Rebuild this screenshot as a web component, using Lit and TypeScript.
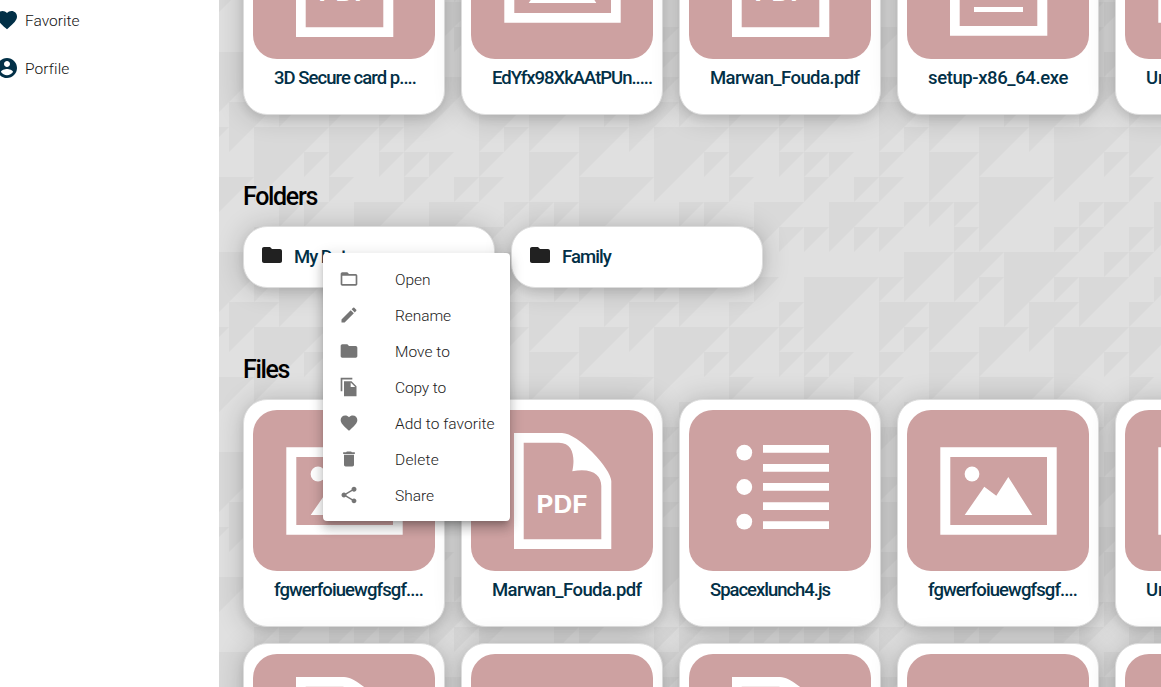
import { LitElement, html, css, svg, unsafeCSS } from "lit";
import { customElement, property } from "lit/decorators.js";

// Triangle mosaic: L = light cell, D = dark cell, T = dark upper-left half.
const MOSAIC = [
  "TTTLLTTTLDTTDDTD",
  "LTTTLTLDTTLLDTTT",
  "LLTLTTLTLDDTTLLT",
  "DTLDTLTTTDTLLTTL",
  "TTTTTTLLTTLLTTLT",
  "LLLLLLDTDTDDTLTT",
  "TLDDTTTLTTDTTDTL",
  "LTDTLDTDTLTDTTLT",
];
const CELL = 25;
const mosaicPath = MOSAIC.map((row, r) =>
  [...row]
    .map((c, i) => {
      const start = `M${i * CELL} ${r * CELL}h${CELL}`;
      if (c === "D") return `${start}v${CELL}h-${CELL}z`;
      if (c === "T") return `${start}l-${CELL} ${CELL}z`;
      return "";
    })
    .join("")
).join("");
const mosaic = encodeURIComponent(
  `<svg xmlns="http://www.w3.org/2000/svg" width="400" height="200"><path fill="#e0e0e0" d="M0 0h400v200H0z"/><path fill="#d9d9d9" d="${mosaicPath}"/></svg>`
);

const ICONS: Record<string, string> = {
  heart:
    "M12 21.35l-1.45-1.32C5.4 15.36 2 12.28 2 8.5 2 5.42 4.42 3 7.5 3c1.74 0 3.41.81 4.5 2.09C13.09 3.81 14.76 3 16.5 3 19.58 3 22 5.42 22 8.5c0 3.78-3.4 6.86-8.55 11.54L12 21.35z",
  account:
    "M12 2C6.48 2 2 6.48 2 12s4.48 10 10 10 10-4.48 10-10S17.52 2 12 2zm0 3c1.66 0 3 1.34 3 3s-1.34 3-3 3-3-1.34-3-3 1.34-3 3-3zm0 14.2c-2.5 0-4.71-1.28-6-3.22.03-1.99 4-3.08 6-3.08 1.99 0 5.97 1.09 6 3.08-1.29 1.94-3.5 3.22-6 3.22z",
  folder:
    "M10 4H4c-1.1 0-1.99.9-1.99 2L2 18c0 1.1.9 2 2 2h16c1.1 0 2-.9 2-2V8c0-1.1-.9-2-2-2h-8l-2-2z",
  folderOpen:
    "M20 6h-8l-2-2H4c-1.1 0-1.99.9-1.99 2L2 18c0 1.1.9 2 2 2h16c1.1 0 2-.9 2-2V8c0-1.1-.9-2-2-2zm0 12H4V8h16v10z",
  edit: "M3 17.25V21h3.75L17.81 9.94l-3.75-3.75L3 17.25zM20.71 7.04c.39-.39.39-1.02 0-1.41l-2.34-2.34a.9959.9959 0 0 0-1.41 0l-1.83 1.83 3.75 3.75 1.83-1.83z",
  copy: "M16 1H2v16h2V3h12V1zm-1 4l6 6v12H6V5h9zm-1 7h5.5L14 6.5V12z",
  trash: "M6 19c0 1.1.9 2 2 2h8c1.1 0 2-.9 2-2V7H6v12zM19 4h-3.5l-1-1h-5l-1 1H5v2h14V4z",
  share:
    "M18 16.08c-.76 0-1.44.3-1.96.77L8.91 12.7c.05-.23.09-.46.09-.7s-.04-.47-.09-.7l7.05-4.11c.54.5 1.25.81 2.04.81 1.66 0 3-1.34 3-3s-1.34-3-3-3-3 1.34-3 3c0 .24.04.47.09.7L8.04 9.81C7.5 9.31 6.79 9 6 9c-1.66 0-3 1.34-3 3s1.34 3 3 3c.79 0 1.5-.31 2.04-.81l7.12 4.16c-.05.21-.08.43-.08.65 0 1.61 1.31 2.92 2.92 2.92 1.61 0 2.92-1.31 2.92-2.92s-1.31-2.92-2.92-2.92z",
};
const icon = (name: string, size = 24) =>
  html`<svg width=${size} height=${size} viewBox="0 0 24 24"><path fill="currentColor" d=${ICONS[name]}></path></svg>`;

const sheet = (bottom: number) =>
  svg`<path fill-rule="evenodd" d="M43 23H91C107 23 140.3 59 140.3 71V${bottom}H43ZM52.7 32.7V${bottom - 9.8}H130.3V76C130.3 65 121 57.5 101.3 61.3C104 49 103 32.7 88 32.7Z"/>`;

const ART: Record<string, unknown> = {
  pdf: svg`${sheet(139)}<text class="pdf" x="65.5" y="103.4" textLength="51" lengthAdjust="spacingAndGlyphs">PDF</text>`,
  exe: svg`${sheet(137.7)}<path d="M67 109h49v5H67zM67 95h49v5H67zM67 81h49v5H67z"/>`,
  image: svg`<path fill-rule="evenodd" d="M33.3 37.3H149.7V124.7H33.3ZM43.3 47V115H140V47Z"/><circle cx="65" cy="64" r="7.4"/><path d="M57.7 105L77.3 76.7L89.3 85.7L101.3 67L125.3 105Z"/>`,
  list: svg`<circle cx="55.3" cy="42.6" r="7.9"/><circle cx="55.3" cy="77" r="7.9"/><circle cx="55.3" cy="111.6" r="7.9"/><path d="M74 35h66v7.7H74zM74 54h66v7.7H74zM74 73h66v7.7H74zM74 92.2h66v7.7H74zM74 111.3h66v7.7H74z"/>`,
};

// A single line of text tracked so that it spans the given width.
@customElement("tracked-text")
class TrackedText extends LitElement {
  @property() text = "";
  @property({ type: Number }) span = 0;
  static styles = css`
    :host { display: block; white-space: nowrap; }
    .line { display: inline-block; }
  `;
  render() {
    return html`<span class="line">${this.text}</span>`;
  }
  updated() {
    const line = this.renderRoot.querySelector(".line") as HTMLElement;
    line.style.letterSpacing = "0px";
    const natural = line.getBoundingClientRect().width;
    if (this.span) line.style.letterSpacing = `${(this.span - natural) / this.text.length}px`;
  }
}

type Entry = [string, string, number];

const RECENT: Entry[] = [
  ["pdf", "3D Secure card p....", 142],
  ["image", "EdYfx98XkAAtPUn.....", 160],
  ["pdf", "Marwan_Fouda.pdf", 149.5],
  ["exe", "setup-x86_64.exe", 140],
  ["image", "Untitled.png", 100],
];
const FILES: Entry[] = [
  ["image", "fgwerfoiuewgfsgf....", 149],
  ["pdf", "Marwan_Fouda.pdf", 149.5],
  ["list", "Spacexlunch4.js", 120],
  ["image", "fgwerfoiuewgfsgf....", 149],
  ["image", "Untitled.png", 100],
  ["pdf", "Marwan_Fouda.pdf", 149.5],
  ["image", "fgwerfoiuewgfsgf....", 149],
  ["exe", "setup-x86_64.exe", 140],
  ["image", "fgwerfoiuewgfsgf....", 149],
  ["image", "Untitled.png", 100],
];
const MENU: Entry[] = [
  ["folderOpen", "Open", 35.5],
  ["edit", "Rename", 56],
  ["folder", "Move to", 55],
  ["copy", "Copy to", 51],
  ["heart", "Add to favorite", 99.5],
  ["trash", "Delete", 44],
  ["share", "Share", 39],
];

@customElement("app-root")
class AppRoot extends LitElement {
  static styles = css`
    :host {
      display: flex;
      position: relative;
      width: 100%;
      height: 687px;
      overflow: hidden;
      background: #fff;
      font-family: Roboto, "Open Sans", sans-serif;
    }
    svg { display: block; flex: none; }
    .side {
      flex: none;
      box-sizing: border-box;
      width: 224px;
      margin-left: -5px;
      padding: 8px 5px 0 0;
      display: flex;
      flex-direction: column;
      gap: 24px;
    }
    .nav {
      display: flex;
      align-items: center;
      gap: 6px;
      height: 24px;
      color: #023047;
    }
    .nav tracked-text { padding-top: 2px; font-size: 15.5px; font-weight: 300; color: #111; line-height: 24px; }
    .main {
      flex: 1;
      min-width: 0;
      overflow: hidden;
      background: url("data:image/svg+xml,${unsafeCSS(mosaic)}") 135px -73px;
    }
    .scroll { margin-top: -113px; padding-left: 24px; width: 1080px; }
    .grid { display: grid; grid-template-columns: repeat(5, 202px); gap: 16px; }
    .card, .folder {
      box-sizing: border-box;
      border: 1px solid #ddd;
      border-radius: 24px;
      background: #fff;
      box-shadow: 0 4px 8px rgba(0, 0, 0, 0.08), 0 1px 28px rgba(0, 0, 0, 0.2);
    }
    .card { height: 228px; padding: 10px 9px; overflow: hidden; }
    .thumb { border-radius: 24px; background: #cda1a1; fill: #fff; }
    .pdf { font: bold 24px Inter, "Liberation Sans", sans-serif; }
    .name {
      margin: 7px 0 0 21px;
      font-size: 18.5px;
      font-weight: 500;
      line-height: 24px;
      color: #023047;
    }
    h2 { margin: 0; font-size: 25px; font-weight: 500; line-height: 32px; color: #000; }
    .folders-title { margin-top: 66px; }
    .files-title { margin-top: 66px; margin-bottom: 13px; }
    .folders { display: flex; gap: 16px; margin-top: 13px; }
    .folder {
      width: 252px;
      height: 62px;
      padding: 0 16px 4px;
      display: flex;
      align-items: center;
      gap: 10px;
      color: #212121;
    }
    .folder .name { margin: 3px 0 0; }
    .menu {
      position: absolute;
      left: 323px;
      top: 253px;
      box-sizing: border-box;
      width: 187px;
      padding: 8px 0;
      border-radius: 4px;
      background: #fff;
      box-shadow: 0 5px 5px -3px rgba(0, 0, 0, 0.2), 0 8px 10px 1px rgba(0, 0, 0, 0.14),
        0 3px 14px 2px rgba(0, 0, 0, 0.12);
    }
    .item {
      display: flex;
      align-items: center;
      gap: 36px;
      height: 36px;
      padding-left: 16px;
      color: #757575;
    }
    .item tracked-text { padding-top: 2px; font-size: 15.5px; font-weight: 300; line-height: 24px; color: #212121; }
  `;

  card([art, name, span]: Entry) {
    return html`<div class="card">
      <svg class="thumb" width="182" height="161" viewBox="0 0 182 161">${ART[art]}</svg>
      <tracked-text class="name" .text=${name} .span=${span}></tracked-text>
    </div>`;
  }

  folder(name: string, span: number) {
    return html`<div class="folder">
      ${icon("folder")}<tracked-text class="name" .text=${name} .span=${span}></tracked-text>
    </div>`;
  }

  render() {
    return html`
      <nav class="side">
        <div class="nav">${icon("heart")}<tracked-text .text=${"Favorite"} .span=${54.5}></tracked-text></div>
        <div class="nav">${icon("account")}<tracked-text .text=${"Porfile"} .span=${44}></tracked-text></div>
      </nav>
      <main class="main">
        <div class="scroll">
          <div class="grid">${RECENT.map((f) => this.card(f))}</div>
          <h2 class="folders-title"><tracked-text .text=${"Folders"} .span=${74}></tracked-text></h2>
          <div class="folders">${this.folder("My Data", 61)}${this.folder("Family", 49)}</div>
          <h2 class="files-title"><tracked-text .text=${"Files"} .span=${46}></tracked-text></h2>
          <div class="grid">${FILES.map((f) => this.card(f))}</div>
        </div>
      </main>
      <div class="menu">
        ${MENU.map(
          ([glyph, label, span]) =>
            html`<div class="item">${icon(glyph, 20)}<tracked-text .text=${label} .span=${span}></tracked-text></div>`
        )}
      </div>
    `;
  }
}
